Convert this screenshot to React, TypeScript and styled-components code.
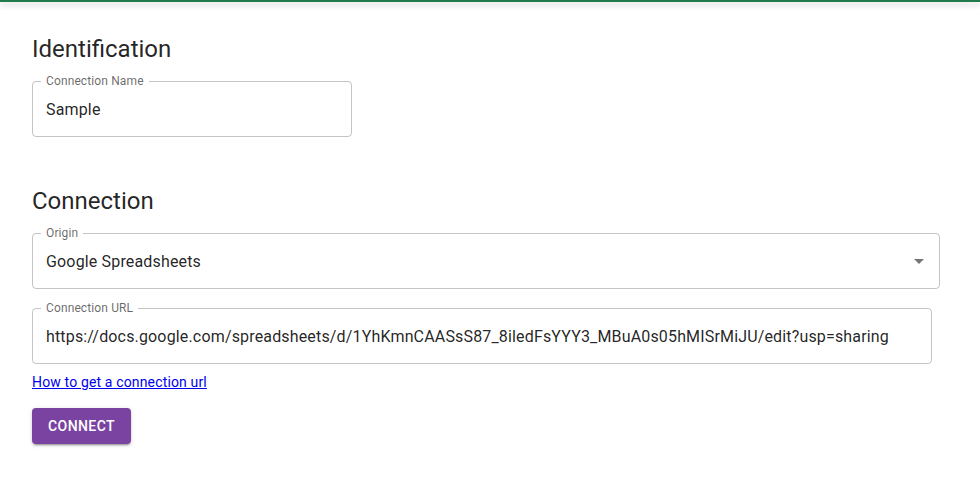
import React from "react";
import styled, { createGlobalStyle } from "styled-components";

const Global = createGlobalStyle`
  html, body { margin: 0; padding: 0; background: #fff; }
  body { font-family: Roboto, "Liberation Sans", Arial, sans-serif; color: rgba(0,0,0,0.87); }
  * { box-sizing: border-box; }
`;

const TopBar = styled.div`
  height: 2px;
  background: #1f7a4c;
  box-shadow: 0 2px 4px -1px rgba(0,0,0,0.2), 0 4px 5px 0 rgba(0,0,0,0.14), 0 1px 10px 0 rgba(0,0,0,0.12);
`;

const Page = styled.main`
  display: flex;
  flex-direction: column;
  align-items: flex-start;
  padding: 31px 32px 40px 32px;
`;

const Heading = styled.h5<{ $top?: number }>`
  margin: ${(p) => p.$top ?? 0}px 0 0 0;
  font-size: 24px;
  font-weight: 400;
  line-height: 32px;
  letter-spacing: 0;
  color: rgba(0,0,0,0.87);
`;

const FieldBox = styled.div<{ $width: number; $top: number }>`
  position: relative;
  width: ${(p) => p.$width}px;
  height: 56px;
  margin-top: ${(p) => p.$top}px;
  border: 1px solid rgba(0,0,0,0.23);
  border-radius: 4px;
  display: flex;
  align-items: center;
  padding: 0 13px;
`;

const FloatLabel = styled.label`
  position: absolute;
  top: -9px;
  left: 8px;
  padding: 0 5px;
  background: #fff;
  font-size: 12px;
  line-height: 16px;
  color: rgba(0,0,0,0.6);
  letter-spacing: 0.01em;
`;

const Value = styled.span`
  font-size: 16px;
  line-height: 23px;
  letter-spacing: 0.01em;
  color: rgba(0,0,0,0.87);
  white-space: nowrap;
  flex: 1;
`;

const Arrow = styled.svg`
  width: 24px;
  height: 24px;
  fill: rgba(0,0,0,0.54);
  margin-right: -5px;
`;

const HelpLink = styled.a`
  margin-top: 10px;
  font-size: 14px;
  line-height: 16px;
  letter-spacing: 0.15px;
  color: #0000ee;
  text-decoration: underline;
`;

const Button = styled.button`
  margin-top: 18px;
  height: 36px;
  padding: 0 16px;
  border: none;
  border-radius: 4px;
  background: #7b43a1;
  color: #fff;
  font-family: Roboto, "Liberation Sans", Arial, sans-serif;
  font-size: 14px;
  font-weight: 500;
  letter-spacing: 0.03em;
  text-transform: uppercase;
  box-shadow: 0 3px 1px -2px rgba(0,0,0,0.2), 0 2px 2px 0 rgba(0,0,0,0.14), 0 1px 5px 0 rgba(0,0,0,0.12);
  cursor: pointer;
`;

export default function App() {
  return (
    <>
      <Global />
      <TopBar />
      <Page>
        <Heading>Identification</Heading>
        <FieldBox $width={320} $top={16}>
          <FloatLabel>Connection Name</FloatLabel>
          <Value>Sample</Value>
        </FieldBox>
        <Heading $top={48}>Connection</Heading>
        <FieldBox $width={908} $top={16}>
          <FloatLabel>Origin</FloatLabel>
          <Value>Google Spreadsheets</Value>
          <Arrow viewBox="0 0 24 24">
            <path d="M7 10l5 5 5-5z" />
          </Arrow>
        </FieldBox>
        <FieldBox $width={900} $top={19}>
          <FloatLabel>Connection URL</FloatLabel>
          <Value>https://docs.google.com/spreadsheets/d/1YhKmnCAASsS87_8iledFsYYY3_MBuA0s05hMISrMiJU/edit?usp=sharing</Value>
        </FieldBox>
        <HelpLink href="#">How to get a connection url</HelpLink>
        <Button>Connect</Button>
      </Page>
    </>
  );
}
